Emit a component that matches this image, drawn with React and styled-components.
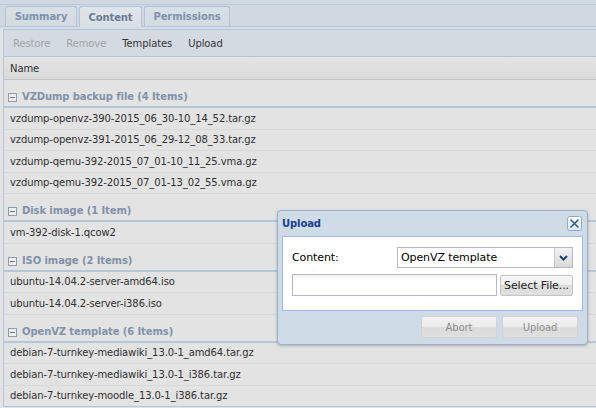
import React from 'react';
import styled, { createGlobalStyle, css } from 'styled-components';

const Global = createGlobalStyle`
  html, body { margin: 0; padding: 0; background: #e3e3e3; }
  body {
    font-family: "DejaVu Sans", Verdana, sans-serif;
    font-size: 10px;
    letter-spacing: -0.1px;
    color: #303030;
    overflow: hidden;
  }
  * { box-sizing: border-box; }
`;

const Page = styled.div`
  position: relative;
  width: 596px;
  height: 408px;
  overflow: hidden;
  display: flex;
  flex-direction: column;
  background: #e3e3e3;
`;

const TabStrip = styled.div`
  height: 27px;
  flex: none;
  display: flex;
  align-items: flex-end;
  gap: 2px;
  padding-left: 5px;
  background: linear-gradient(#d0d9e1 0 4px, #bccbda 4px 5px, #d0d9e1 5px);
  border-bottom: 1px solid #b3c5d8;
`;

const Tab = styled.div`
  position: relative;
  width: ${p => p.$w}px;
  height: 20px;
  display: flex;
  align-items: center;
  justify-content: center;
  font-weight: bold;
  border: 1px solid #b4c5d7;
  border-bottom: none;
  border-radius: 3px 3px 0 0;
  color: #8092aa;
  background: linear-gradient(#d9e0e7, #d2dae2);
  ${p => p.$active && css`
    height: 21px;
    margin-bottom: -1px;
    color: #6b7b91;
    background: linear-gradient(#dfe5eb, #d8dfe6);
    z-index: 1;
  `}
`;

const TabGap = styled.div`
  height: 2px;
  flex: none;
  background: #d7dee5;
`;

const Body = styled.div`
  flex: 1;
  min-height: 0;
  margin: 0 0 1px 3px;
  border-left: 1px solid #b3c5d8;
  border-top: 1px solid #b3c5d8;
  border-bottom: 1px solid #b3c5d8;
  display: flex;
  flex-direction: column;
  overflow: hidden;
`;

const Toolbar = styled.div`
  height: 27px;
  flex: none;
  display: flex;
  align-items: center;
  padding-left: 1px;
  background: #d3dae2;
  border-bottom: 1px solid #b3c5d8;
`;

const ToolButton = styled.div`
  padding: 0 8px;
  color: ${p => (p.$disabled ? '#a3a3a3' : '#333333')};
`;

const GridHeader = styled.div`
  height: 23px;
  flex: none;
  display: flex;
  align-items: center;
  padding-left: 6px;
  color: #303030;
  background: linear-gradient(#e5e5e5, #d8d8d8);
  border-bottom: 1px solid #c3c3c3;
`;

const GroupHeader = styled.div`
  height: 28px;
  flex: none;
  display: flex;
  align-items: flex-end;
  gap: 5px;
  padding: 0 0 3px 4px;
  font-weight: bold;
  color: #8192aa;
  border-bottom: 2px solid #b5c6d8;
  line-height: 12px;
`;

const GroupIcon = styled.span`
  width: 9px;
  height: 9px;
  margin-bottom: 1px;
  border: 1px solid #8d9db3;
  background: #eeeeee;
  display: flex;
  align-items: center;
  justify-content: center;
  &::after {
    content: "";
    width: 5px;
    height: 1px;
    background: #6e7e94;
  }
`;

const Row = styled.div`
  height: 21.5px;
  flex: none;
  display: flex;
  align-items: center;
  padding-left: 6px;
  border-bottom: 1px solid #d9d9d9;
  color: #303030;
`;

/* Upload window */
const Window = styled.div`
  position: absolute;
  left: 277px;
  top: 210px;
  width: 311px;
  border: 1px solid #9fb1c6;
  border-radius: 4px;
  background: #cfdbe6;
  box-shadow: 0 1px 3px rgba(60, 70, 90, 0.35);
  z-index: 10;
`;

const TitleBar = styled.div`
  height: 25px;
  display: flex;
  align-items: center;
  justify-content: space-between;
  padding: 0 5px 0 4px;
`;

const Title = styled.div`
  font-weight: bold;
  color: #15428b;
`;

const CloseButton = styled.div`
  width: 15px;
  height: 15px;
  display: flex;
`;

const WinBody = styled.div`
  margin: 0 4px;
  border: 1px solid #9dbbe2;
  background: #ffffff;
  padding: 10px 9px 14px 9px;
  display: flex;
  flex-direction: column;
  gap: 6px;
`;

const FieldRow = styled.div`
  display: flex;
  align-items: center;
  gap: ${p => p.$gap || 0}px;
`;

const Label = styled.div`
  width: 105px;
  flex: none;
  color: #000000;
  font-size: 11px;
`;

const Combo = styled.div`
  flex: 1;
  height: 21px;
  display: flex;
  border: 1px solid #b5b8c8;
  background: #fff;
`;

const ComboText = styled.div`
  flex: 1;
  display: flex;
  align-items: center;
  padding-left: 3px;
  color: #000;
  font-size: 11px;
`;

const Trigger = styled.div`
  width: 18px;
  display: flex;
  align-items: center;
  justify-content: center;
  border-left: 1px solid #c8c8c8;
  background: linear-gradient(#f3f3f3, #d9d9d9);
`;

const TextInput = styled.div`
  width: 205px;
  height: 22px;
  flex: none;
  border: 1px solid #b5b8c8;
  background: linear-gradient(#f2f2f2, #ffffff 4px);
`;

const Button = styled.div`
  width: ${p => (p.$w ? `${p.$w}px` : 'auto')};
  flex: ${p => (p.$w ? 'none' : '1')};
  height: ${p => p.$h || 22}px;
  display: flex;
  align-items: center;
  justify-content: center;
  border: 1px solid ${p => (p.$disabled ? '#d3d3d3' : '#c4c4c4')};
  border-radius: 2px;
  color: ${p => (p.$disabled ? '#8e8e8e' : '#222222')};
  font-size: ${p => (p.$disabled ? '10px' : '11px')};
  background: ${p => (p.$disabled
    ? 'linear-gradient(#f1f1f1 0, #ebebeb 50%, #dcdcdc 50%, #dedede 100%)'
    : 'linear-gradient(#f7f7f7 0, #eeeeee 50%, #dddddd 50%, #e0e0e0 100%)')};
`;

const Footer = styled.div`
  display: flex;
  justify-content: flex-end;
  gap: 5px;
  padding: 5px 9px 6px 0;
`;

const groups = [
  { title: 'VZDump backup file (4 Items)', rows: [
    'vzdump-openvz-390-2015_06_30-10_14_52.tar.gz',
    'vzdump-openvz-391-2015_06_29-12_08_33.tar.gz',
    'vzdump-qemu-392-2015_07_01-10_11_25.vma.gz',
    'vzdump-qemu-392-2015_07_01-13_02_55.vma.gz',
  ] },
  { title: 'Disk image (1 Item)', rows: ['vm-392-disk-1.qcow2'] },
  { title: 'ISO image (2 Items)', rows: [
    'ubuntu-14.04.2-server-amd64.iso',
    'ubuntu-14.04.2-server-i386.iso',
  ] },
  { title: 'OpenVZ template (6 Items)', rows: [
    'debian-7-turnkey-mediawiki_13.0-1_amd64.tar.gz',
    'debian-7-turnkey-mediawiki_13.0-1_i386.tar.gz',
    'debian-7-turnkey-moodle_13.0-1_i386.tar.gz',
  ] },
];

export default function App() {
  return (
    <>
      <Global />
      <Page>
        <TabStrip>
          <Tab $w={72}>Summary</Tab>
          <Tab $w={63} $active>Content</Tab>
          <Tab $w={86}>Permissions</Tab>
        </TabStrip>
        <TabGap />
        <Body>
          <Toolbar>
            <ToolButton $disabled>Restore</ToolButton>
            <ToolButton $disabled>Remove</ToolButton>
            <ToolButton>Templates</ToolButton>
            <ToolButton>Upload</ToolButton>
          </Toolbar>
          <GridHeader>Name</GridHeader>
          {groups.map(g => (
            <React.Fragment key={g.title}>
              <GroupHeader>
                <GroupIcon />
                <span>{g.title}</span>
              </GroupHeader>
              {g.rows.map(r => <Row key={r}>{r}</Row>)}
            </React.Fragment>
          ))}
        </Body>

        <Window>
          <TitleBar>
            <Title>Upload</Title>
            <CloseButton>
              <svg width="15" height="15" viewBox="0 0 15 15">
                <defs>
                  <linearGradient id="cbg" x1="0" y1="0" x2="0" y2="1">
                    <stop offset="0" stopColor="#fbfdff" />
                    <stop offset="1" stopColor="#dde7f1" />
                  </linearGradient>
                </defs>
                <rect x="0.5" y="0.5" width="14" height="14" rx="2" fill="url(#cbg)" stroke="#95abc5" />
                <path d="M4 4 L11 11 M11 4 L4 11" stroke="#2d5a94" strokeWidth="1.6" strokeLinecap="round" />
              </svg>
            </CloseButton>
          </TitleBar>
          <WinBody>
            <FieldRow>
              <Label>Content:</Label>
              <Combo>
                <ComboText>OpenVZ template</ComboText>
                <Trigger>
                  <svg width="9" height="6" viewBox="0 0 9 6">
                    <path d="M1 1 L4.5 4.5 L8 1" fill="none" stroke="#1e3f74" strokeWidth="2" />
                  </svg>
                </Trigger>
              </Combo>
            </FieldRow>
            <FieldRow $gap={3}>
              <TextInput />
              <Button $h={21}>Select File...</Button>
            </FieldRow>
          </WinBody>
          <Footer>
            <Button $w={76} $disabled>Abort</Button>
            <Button $w={76} $disabled>Upload</Button>
          </Footer>
        </Window>
      </Page>
    </>
  );
}
